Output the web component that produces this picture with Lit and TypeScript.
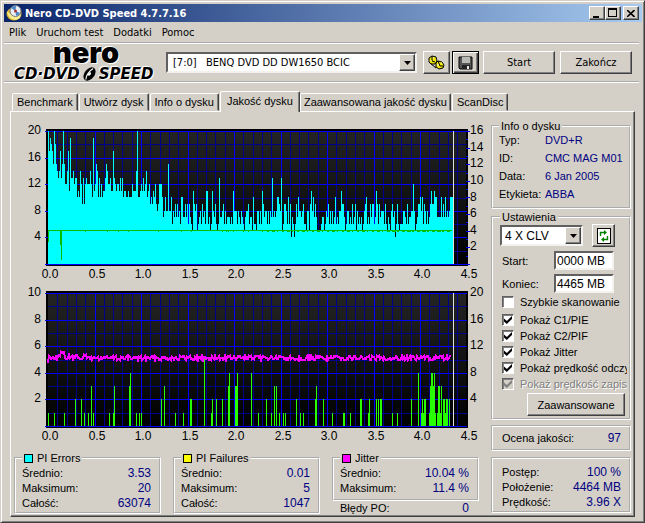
import { LitElement, css, html, svg } from "lit";
import { customElement, property } from "lit/decorators.js";

/* PI Errors, one sample per pixel column of the plot */
const PI_ERRORS = [
  20,17,19,18,17,15,20,18,15,14,13,14,17,13,15,20,15,12,12,14,17,11,19,13,13,14,12,13,13,10,11,10,14,12,9,13,9,12,13,12,
  12,12,14,12,10,19,11,12,15,14,10,13,10,12,10,11,11,13,15,14,12,12,13,11,11,17,13,12,11,12,12,11,13,11,13,10,11,11,10,10,
  11,10,10,10,12,11,11,11,14,20,10,10,11,12,11,13,11,12,14,10,11,12,9,10,9,11,10,12,9,8,9,12,12,12,10,7,8,10,8,8,
  15,8,8,10,6,8,7,9,7,9,7,8,6,10,10,7,7,9,7,9,6,9,7,6,5,11,9,8,9,5,6,7,8,6,9,7,8,6,11,11,
  6,7,5,6,11,8,7,9,6,5,6,13,7,7,8,9,6,8,6,7,7,7,6,7,6,11,8,8,8,6,8,7,6,8,7,6,5,7,8,8,
  9,6,7,7,5,10,6,6,5,8,8,6,8,6,11,9,7,8,8,6,8,6,8,7,13,7,8,7,8,10,10,9,8,13,5,6,9,9,8,6,
  10,6,9,4,7,6,4,6,9,7,10,8,8,7,8,9,6,6,5,8,8,5,9,11,8,10,7,9,7,5,5,5,5,6,7,7,5,6,8,7,
  9,6,8,6,8,6,7,10,6,7,6,8,8,11,9,9,7,5,6,8,8,6,7,6,9,6,7,9,5,8,6,7,6,7,5,6,8,9,10,6,
  7,6,9,7,9,9,6,7,11,9,6,9,7,8,8,8,6,9,6,5,7,6,5,8,9,7,8,4,6,9,6,5,6,6,6,8,8,7,6,9,
  6,7,7,8,8,12,8,5,6,7,9,9,10,8,10,6,9,8,6,8,6,7,9,11,9,9,11,10,10,7,7,7,7,10,7,9,7,10,7,8,
  7,8,10,10,10,
];

/* PI Failures as [column, count] */
const PI_FAILURES: Array<[number, number]> = [
  [0,1],[6,1],[16,1],[27,2],[33,2],[36,1],[40,1],[43,3],[45,1],[61,1],[65,1],[66,3],[81,3],[82,4],[88,1],[91,1],[93,1],
  [113,2],[116,3],[127,1],[135,1],[142,2],[143,2],[156,5],[163,1],[164,2],[168,2],[174,2],[180,3],[181,4],[187,3],[188,3],
  [189,4],[203,4],[210,1],[218,2],[223,1],[226,3],[228,3],[231,1],[235,1],[237,1],[248,2],[252,1],[255,1],[267,2],[268,3],
  [275,2],[284,1],[295,1],[296,1],[302,1],[312,2],[313,2],[320,1],[321,2],[328,2],[330,2],[332,2],[333,2],[344,1],[349,1],
  [363,2],[370,4],[373,1],[374,2],[375,1],[376,2],[377,2],[381,1],[382,3],[383,4],[384,4],[385,3],[386,4],[387,1],[389,1],
  [390,3],[391,3],[392,1],[393,3],[395,2],[396,2],[397,1],[398,2],[399,2],[401,2],
];

const PLOT_X = 36;
const PLOT_W = 419;
const PLOT_H = 133;
const SAMPLES = 405;

const jitterPath = () => {
  let seed = 7;
  const parts: string[] = [];
  for (let i = 0; i < SAMPLES - 1; i++) {
    seed = (seed * 1103515245 + 12345) % 2147483648;
    const noise = Math.floor((seed / 2147483648) * 5) - 2;
    const bump = i > 11 && i < 17 ? -4 : i < 40 ? -1 : 0;
    const y = i === 0 ? 79 : 74 + bump + noise;
    parts.push(`${i === 0 ? "M" : "L"}${PLOT_X + i} ${y}`);
  }
  return parts.join("");
};

const plotFrame = (top: number) => {
  const lines = [];
  for (let i = 0; i <= 45; i++) {
    if (i % 5 === 0) continue;
    const x = PLOT_X + Math.round(i * 9.3);
    lines.push(svg`<rect class="minor" x=${x} y=${top} width="1" height=${PLOT_H}></rect>`);
  }
  for (let i = 1; i < 10; i += 2) {
    const y = top + Math.round(i * 13.3);
    lines.push(svg`<rect class="minor" x=${PLOT_X} y=${y} width=${PLOT_W} height="1"></rect>`);
  }
  for (let i = 1; i < 9; i++) {
    const x = PLOT_X + Math.round(i * 46.5);
    lines.push(svg`<rect class="major" x=${x} y=${top} width="1" height=${PLOT_H}></rect>`);
  }
  for (let i = 0; i <= 10; i += 2) {
    const y = top + Math.round(i * 13.3);
    lines.push(svg`<rect class="major" x=${PLOT_X - 3} y=${y} width=${PLOT_W + 3} height="1"></rect>`);
  }
  return svg`
    <defs>
      <linearGradient id="shade" x1="0" y1="0" x2="0" y2="1">
        <stop offset="0" stop-color="#242424"></stop>
        <stop offset="1" stop-color="#000"></stop>
      </linearGradient>
    </defs>
    <rect x=${PLOT_X - 2} y=${top - 2} width=${PLOT_W + 3} height=${PLOT_H + 4}></rect>
    <rect x=${PLOT_X} y=${top} width=${PLOT_W - 1} height=${PLOT_H} fill="url(#shade)"></rect>
    ${lines}`;
};

const axisLabels = (top: number, left: number[], right: number[], base: number) => svg`
  ${left.map((v, i) => svg`<text class="end" x="29" y=${top + 3 + Math.round(i * 26.6)}>${v}</text>`)}
  ${right.map((v, i) => svg`<text x="458" y=${top + 3 + Math.round((i * PLOT_H) / right.length)}>${v}</text>`)}
  ${Array.from({ length: 10 }, (_, i) => svg`<text class="mid" x=${PLOT_X + 2 + Math.round(i * 46.5)} y=${base}>${(i / 2).toFixed(1)}</text>`)}`;

@customElement("quality-charts")
class QualityCharts extends LitElement {
  static styles = css`
    :host { display: block; }
    svg { display: block; width: 100%; height: auto; shape-rendering: crispEdges; }
    text { font: 12px "Liberation Sans", Arial, sans-serif; fill: #000; }
    .end { text-anchor: end; }
    .mid { text-anchor: middle; }
    .minor { fill: #00008c; }
    .major { fill: #0000ff; }
    .errors { fill: #00ffff; }
    .failures { fill: #28ff00; }
    .speed { fill: #00c000; }
    .cursor { fill: #e0e0e0; }
    .jitter { fill: none; stroke: #ff00ff; stroke-width: 2; }
  `;

  render() {
    const top = 11;
    const floor = top + PLOT_H;
    const low = 9;
    return html`
      <svg viewBox="0 0 475 164" role="img" aria-label="PI Errors">
        ${plotFrame(top)}
        ${Array.from({ length: 17 }, (_, i) => svg`<rect class="major" x="454" y=${top + Math.round(i * 8.3)} width=${i % 2 ? 2 : 4} height="1"></rect>`)}
        ${PI_ERRORS.map((v, i) => {
          const h = Math.round(v * 6.65);
          return svg`<rect class="errors" x=${PLOT_X + i} y=${floor - h} width="1" height=${h}></rect>`;
        })}
        <rect class="speed" x="36" y="110" width="404" height="1"></rect>
        <rect class="speed" x="36" y="110" width="1" height="12"></rect>
        <rect class="speed" x="48" y="110" width="1" height="15"></rect>
        <rect class="speed" x="49" y="110" width="1" height="30"></rect>
        ${[73, 95, 106, 116, 146, 169, 179, 210, 214, 216, 221, 231, 236].map((x) => svg`<rect class="speed" x=${x} y="111" width="1" height="1"></rect>`)}
        ${Array.from({ length: 38 }, (_, i) => svg`<rect class="speed" x=${250 + i * 5} y="111" width=${1 + (i % 3) + (i > 24 ? 1 : 0)} height="1"></rect>`)}
        <rect class="cursor" x="441" y=${top} width="1" height=${PLOT_H}></rect>
        ${axisLabels(top, [20, 16, 12, 8, 4], [16, 14, 12, 10, 8, 6, 4, 2], 158)}
      </svg>
      <svg viewBox="0 0 475 162" role="img" aria-label="PI Failures, Jitter">
        ${plotFrame(low)}
        ${PI_FAILURES.map(([x, v]) => {
          const h = Math.round(v * 13.3);
          return svg`<rect class="failures" x=${PLOT_X + x} y=${low + PLOT_H - h} width="1" height=${h}></rect>`;
        })}
        <path class="jitter" d=${jitterPath()}></path>
        <rect class="cursor" x="441" y=${low} width="1" height=${PLOT_H}></rect>
        ${axisLabels(low, [10, 8, 6, 4, 2], [20, 16, 12, 8, 4], 156)}
      </svg>
    `;
  }
}

@customElement("stat-row")
class StatRow extends LitElement {
  @property() label = "";
  @property() value = "";
  static styles = css`
    :host { display: flex; justify-content: space-between; white-space: nowrap; line-height: 15px; }
    .value { color: #000080; font-size: 12px; }
  `;
  render() {
    return html`<span>${this.label}</span><span class="value">${this.value}</span>`;
  }
}

const arrow = html`<span class="arrow" aria-hidden="true"><svg width="7" height="4" viewBox="0 0 7 4"><path d="M0 0H7L3.5 4Z"></path></svg></span>`;

@customElement("app-root")
class AppRoot extends LitElement {
  static styles = css`
    :host {
      display: block;
      --face: #d4d0c8;
      --ui: "DejaVu Sans Condensed", "DejaVu Sans", sans-serif;
      font: 11px "Liberation Sans", Arial, sans-serif;
      color: #000;
    }
    * { box-sizing: border-box; }
    svg { display: block; }
    button, input, select { font: inherit; color: inherit; border-radius: 0; margin: 0; }

    .window {
      min-height: 100vh;
      background: var(--face);
      border: 1px solid;
      border-color: var(--face) #404040 #404040 var(--face);
      box-shadow: inset 1px 1px #fff, inset -1px -1px #808080;
      padding: 3px 2px 4px 3px;
    }
    .titlebar {
      display: flex;
      align-items: center;
      height: 18px;
      padding: 0 3px 0 2px;
      background: linear-gradient(90deg, #0a246a, #a6caf0);
      color: #fff;
      font: bold 11px var(--ui);
      gap: 2px;
    }
    .caption { flex: 1; font: inherit; margin: 0; white-space: nowrap; }
    .caption-buttons { display: flex; }

    .raised {
      display: flex;
      align-items: center;
      justify-content: center;
      padding: 0;
      background: var(--face);
      border: 1px solid;
      border-color: #fff #404040 #404040 #fff;
      box-shadow: inset -1px -1px #808080;
    }
    .caption-buttons .raised { width: 16px; height: 14px; color: #000; }
    .caption-buttons .close { margin-left: 2px; }

    .menu { display: flex; height: 20px; align-items: center; padding: 0 5px; gap: 10px; font: 11px var(--ui); }
    .menu button { border: 0; padding: 0; background: none; }

    .toolbar {
      display: flex;
      align-items: center;
      height: 41px;
      margin-right: 3px;
      padding: 0 7px 0 10px;
      border-top: 2px groove #fff;
      border-bottom: 2px groove #fff;
      font: 11px var(--ui);
    }
    .logo { width: 152px; text-shadow: 1px 1px #fff, -1px -1px #fff; }
    .brand { font: 900 29px/16px Inter, sans-serif; text-align: center; height: 22px; padding-right: 8px; }
    .product { display: flex; align-items: center; font: italic bold 15px/14px "DejaVu Sans", sans-serif; height: 14px; }
    .combo { position: relative; display: flex; }
    .combo select {
      appearance: none;
      width: 100%;
      height: 21px;
      padding: 0 20px 0 5px;
      background: #fff;
      border: 2px solid;
      border-color: #606060 #f4f2ee #f4f2ee #606060;
      white-space: pre;
    }
    .arrow {
      position: absolute;
      top: 2px;
      right: 2px;
      bottom: 2px;
      width: 16px;
      display: flex;
      align-items: center;
      justify-content: center;
      background: var(--face);
      border: 1px solid;
      border-color: #fff #404040 #404040 #fff;
      box-shadow: inset -1px -1px #808080;
      pointer-events: none;
    }
    .drive { flex: 1; margin-right: 6px; }
    .tool { width: 27px; height: 23px; margin-right: 2px; }
    .default { border-color: #000; box-shadow: inset 1px 1px #fff, inset -1px -1px #404040, inset -2px -2px #808080; margin-right: 4px; }
    .action { width: 72px; height: 23px; }
    .action + .action { margin-left: 5px; }

    .tabs { display: flex; align-items: flex-end; height: 28px; padding-left: 8px; }
    .tab {
      height: 18px;
      padding: 0 4px;
      background: var(--face);
      border: 1px solid;
      border-color: #fff #404040 transparent #fff;
      border-radius: 2px 2px 0 0;
      box-shadow: inset -1px 0 #808080;
      margin-right: 1px;
      white-space: nowrap;
    }
    .tab.active { height: 21px; padding: 0 6px 2px; border-bottom: 0; margin: 0 0 -1px; position: relative; }
    .tab.active + .tab { padding: 0 3px; }

    .panel {
      display: flex;
      margin: 0 7px 0 6px;
      padding: 0 3px 0 1px;
      border: 1px solid;
      border-color: #fff #404040 #404040 #fff;
      box-shadow: inset -1px -1px #808080;
    }
    .main { flex: 1; min-width: 0; padding-top: 8px; }
    .side { width: 140px; margin-left: 4px; padding-top: 7px; }

    .group { margin: 0; min-width: 0; border: 2px groove #fff; padding: 0 8px 1px 6px; }
    .group legend { display: flex; align-items: center; gap: 4px; height: 14px; line-height: 14px; padding: 0 2px; white-space: nowrap; }
    .swatch { width: 9px; height: 9px; border: 1px solid #000; }
    .cyan { background: #00ffff; }
    .yellow { background: #ffff00; }
    .magenta { background: #ff00ff; }

    .stats { display: grid; grid-template-columns: repeat(3, 1fr); gap: 12px; align-items: start; margin: 5px 8px 0 2px; }
    .stats .group { padding-top: 1px; }
    .jitter { padding-bottom: 3px; }
    .below { padding: 0 10px 0 8px; }

    .disc { padding-bottom: 4px; }
    .facts { display: grid; grid-template-columns: 46px 1fr; margin: -2px 0 0; line-height: 18px; white-space: nowrap; }
    .facts dd { margin: 0; color: #000080; }

    .settings { margin-top: 1px; padding: 0 2px 2px 7px; }
    .speedline { display: flex; align-items: center; gap: 9px; height: 23px; }
    .speedline .combo { width: 83px; font-size: 12px; }
    .speedline .combo select { padding-left: 3px; }
    .refresh { width: 23px; height: 23px; }
    .field { display: flex; align-items: center; height: 19px; margin-top: 4px; padding-left: 2px; }
    .field label { width: 52px; }
    .field input {
      width: 60px;
      height: 19px;
      padding: 0 1px;
      font-size: 12px;
      background: #fff;
      border: 2px solid;
      border-color: #606060 #f4f2ee #f4f2ee #606060;
    }
    .check { display: flex; align-items: center; gap: 6px; height: 16px; padding-left: 2px; white-space: nowrap; overflow: hidden; }
    .first { margin: 1px 0 2px; }
    .check input {
      appearance: none;
      flex: none;
      display: grid;
      place-items: center;
      width: 12px;
      height: 12px;
      background: #fff;
      border: 1px solid;
      border-color: #606060 #fff #fff #606060;
      box-shadow: inset 1px 1px #808080;
    }
    .check input:checked::before {
      content: "";
      width: 8px;
      height: 8px;
      background: #000;
      clip-path: polygon(0 30%, 35% 62%, 100% 0, 100% 36%, 35% 100%, 0 68%);
    }
    .check input:disabled { background: var(--face); }
    .check input:disabled::before { background: #808080; }
    .off { color: #808080; text-shadow: 1px 1px #fff; }
    .advanced { width: 98px; height: 23px; margin: 1px 2px 0 auto; font-size: 11px; }

    .score { margin-top: 5px; padding: 4px 8px 3px 9px; }
    .progress { margin-top: 6px; padding: 6px 8px 1px 9px; }
  `;

  private check(id: string, label: string, checked: boolean, cls = "", disabled = false) {
    return html`<div class="check ${cls}">
      <input type="checkbox" id=${id} .checked=${checked} ?disabled=${disabled} /><label for=${id}>${label}</label>
    </div>`;
  }

  render() {
    return html`
      <div class="window">
        <header class="titlebar">
          <svg width="17" height="16" viewBox="0 0 17 16">
            <ellipse cx="8" cy="9" rx="7.500" ry="6.500" fill="#d8b830"></ellipse>
            <path d="M1 6C4 10 12 13 15 9L14 13C9 17 2 14 1 6Z" fill="#f8ec90"></path>
            <circle cx="9.500" cy="6" r="5.500" fill="#e8eef8" stroke="#777" stroke-width="1"></circle>
            <path d="M9.500 6L5 3A5 5 0 0 1 10 1ZM9.500 6L14 8A5 5 0 0 1 10 11Z" fill="#4a86c8"></path>
            <circle cx="9.500" cy="6" r="1.500" fill="#b03030"></circle>
          </svg>
          <h1 class="caption">Nero CD-DVD Speed 4.7.7.16</h1>
          <div class="caption-buttons">
            <button class="raised" aria-label="Minimalizuj"><svg width="10" height="9" viewBox="0 0 10 9"><path d="M1 7H7V9H1Z"></path></svg></button>
            <button class="raised" aria-label="Maksymalizuj"><svg width="10" height="10" viewBox="0 0 10 10"><path fill-rule="evenodd" d="M0 0H9V9H0ZM1 2V8H8V2Z"></path></svg></button>
            <button class="raised close" aria-label="Zamknij"><svg width="8" height="7" viewBox="0 0 8 7"><path d="M0 0L7.500 7M7.500 0L0 7" stroke="#000" stroke-width="1.600"></path></svg></button>
          </div>
        </header>

        <nav class="menu">
          <button>Plik</button><button>Uruchom test</button><button>Dodatki</button><button>Pomoc</button>
        </nav>

        <div class="toolbar">
          <div class="logo">
            <div class="brand">nero</div>
            <div class="product">
              <span>CD·DVD</span>
              <svg width="19" height="14" viewBox="0 0 19 14"><g transform="rotate(-52 9.500 7)"><ellipse cx="9.500" cy="7" rx="7.500" ry="5" fill="#000"></ellipse><path d="M3 7.500C6 5 12 5 16 6.500" stroke="#fff" fill="none" stroke-width="1.200"></path><ellipse cx="9.500" cy="7" rx="2" ry="1.200" fill="#fff"></ellipse></g></svg>
              <span>SPEED</span>
            </div>
          </div>
          <div class="combo drive">
            <select aria-label="Napęd"><option>[7:0]\u00a0\u00a0 BENQ DVD DD DW1650 BCIC</option></select>${arrow}
          </div>
          <button class="raised tool" aria-label="Opcje">
            <svg width="17" height="16" viewBox="0 0 17 16">
              <path d="M1 3L4 1L8 2L9 6L7 9L3 9L1 7Z" fill="#f0e800" stroke="#000"></path>
              <path d="M8 8L10 6L14 7L16 10L15 13L11 14L8 12Z" fill="#f0e800" stroke="#000"></path>
              <path d="M2 8L8 13M4 1V6L7 7M10 6L12 11L15 11" stroke="#000" fill="none"></path>
              <path d="M5 3H6M3 5V6M10 9V11M13 8H14" stroke="#fff"></path>
            </svg>
          </button>
          <button class="raised tool default" aria-label="Zapisz">
            <svg width="15" height="14" viewBox="0 0 15 14">
              <path d="M1 1H14V13H2L1 12Z" fill="#555" stroke="#000"></path>
              <rect x="4" y="1" width="8" height="6" fill="#b8b8b4"></rect>
              <rect x="4" y="9" width="8" height="4" fill="#222"></rect>
              <rect x="9" y="10" width="2" height="3" fill="#e8e8e8"></rect>
            </svg>
          </button>
          <button class="raised action">Start</button>
          <button class="raised action">Zakończ</button>
        </div>

        <div class="tabs" role="tablist">
          <button class="tab" role="tab">Benchmark</button>
          <button class="tab" role="tab">Utwórz dysk</button>
          <button class="tab" role="tab">Info o dysku</button>
          <button class="tab active" role="tab" aria-selected="true">Jakość dysku</button>
          <button class="tab" role="tab">Zaawansowana jakość dysku</button>
          <button class="tab" role="tab">ScanDisc</button>
        </div>

        <div class="panel" role="tabpanel">
          <main class="main">
            <quality-charts></quality-charts>
            <div class="stats">
              <fieldset class="group">
                <legend><span class="swatch cyan"></span>PI Errors</legend>
                <stat-row label="Średnio:" value="3.53"></stat-row>
                <stat-row label="Maksimum:" value="20"></stat-row>
                <stat-row label="Całość:" value="63074"></stat-row>
              </fieldset>
              <fieldset class="group">
                <legend><span class="swatch yellow"></span>PI Failures</legend>
                <stat-row label="Średnio:" value="0.01"></stat-row>
                <stat-row label="Maksimum:" value="5"></stat-row>
                <stat-row label="Całość:" value="1047"></stat-row>
              </fieldset>
              <div>
                <fieldset class="group jitter">
                  <legend><span class="swatch magenta"></span>Jitter</legend>
                  <stat-row label="Średnio:" value="10.04 %"></stat-row>
                  <stat-row label="Maksimum:" value="11.4 %"></stat-row>
                </fieldset>
                <stat-row class="below" label="Błędy PO:" value="0"></stat-row>
              </div>
            </div>
          </main>

          <aside class="side">
            <fieldset class="group disc">
              <legend>Info o dysku</legend>
              <dl class="facts">
                <dt>Typ:</dt><dd>DVD+R</dd>
                <dt>ID:</dt><dd>CMC MAG M01</dd>
                <dt>Data:</dt><dd>6 Jan 2005</dd>
                <dt>Etykieta:</dt><dd>ABBA</dd>
              </dl>
            </fieldset>
            <fieldset class="group settings">
              <legend>Ustawienia</legend>
              <div class="speedline">
                <div class="combo"><select aria-label="Prędkość"><option>4 X CLV</option></select>${arrow}</div>
                <button class="raised refresh" aria-label="Odśwież">
                  <svg width="14" height="16" viewBox="0 0 14 16">
                    <rect x="0.500" y="0.500" width="13" height="15" fill="#fff" stroke="#000"></rect>
                    <path d="M3.500 8V4.500H8M10.500 8V11.500H6" fill="none" stroke="#008000" stroke-width="1.400"></path>
                    <path d="M7 2L10 4.500L7 7ZM7 9L4 11.500L7 14Z" fill="#008000"></path>
                  </svg>
                </button>
              </div>
              <div class="field"><label for="from">Start:</label><input id="from" .value=${"0000 MB"} /></div>
              <div class="field"><label for="to">Koniec:</label><input id="to" .value=${"4465 MB"} /></div>
              ${this.check("quick", "Szybkie skanowanie", false, "first")}
              ${this.check("pie", "Pokaż C1/PIE", true)}
              ${this.check("pif", "Pokaż C2/PIF", true)}
              ${this.check("jit", "Pokaż Jitter", true)}
              ${this.check("read", "Pokaż prędkość odczytu", true)}
              ${this.check("write", "Pokaż prędkość zapisu", true, "off", true)}
              <button class="raised advanced">Zaawansowane</button>
            </fieldset>
            <div class="group score"><stat-row label="Ocena jakości:" value="97"></stat-row></div>
            <div class="group progress">
              <stat-row label="Postęp:" value="100 %"></stat-row>
              <stat-row label="Położenie:" value="4464 MB"></stat-row>
              <stat-row label="Prędkość:" value="3.96 X"></stat-row>
            </div>
          </aside>
        </div>
      </div>
    `;
  }
}
